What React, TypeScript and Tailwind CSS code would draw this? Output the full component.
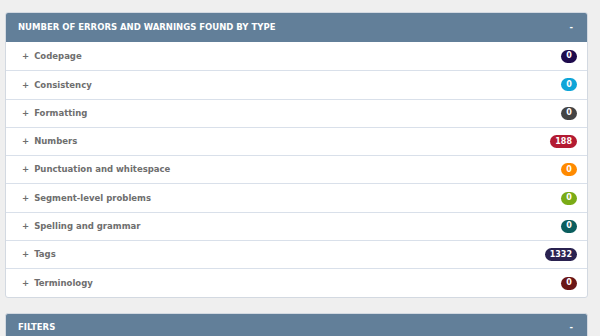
import React from "react";

const rows: { label: string; count: string; color: string }[] = [
  { label: "Codepage", count: "0", color: "bg-[#1e0b4d]" },
  { label: "Consistency", count: "0", color: "bg-[#0ea5d8]" },
  { label: "Formatting", count: "0", color: "bg-[#444444]" },
  { label: "Numbers", count: "188", color: "bg-[#b31b32]" },
  { label: "Punctuation and whitespace", count: "0", color: "bg-[#ff8a00]" },
  { label: "Segment-level problems", count: "0", color: "bg-[#7aab16]" },
  { label: "Spelling and grammar", count: "0", color: "bg-[#0b5e5e]" },
  { label: "Tags", count: "1332", color: "bg-[#2a2250]" },
  { label: "Terminology", count: "0", color: "bg-[#6a1616]" },
];

export default function App() {
  return (
    <div
      className="w-[600px] h-[336px] overflow-hidden bg-[#efefef] pt-[12px] pl-[5px] pr-[12px]"
      style={{ fontFamily: '"DejaVu Sans", Verdana, sans-serif' }}
    >
      <div className="rounded-[3px] border border-[#d3d9e1] bg-white overflow-hidden">
        <div className="h-[29px] bg-[#627f99] flex items-center justify-between pl-[12px] pr-[14px] text-white font-bold text-[8.5px]">
          <span>NUMBER OF ERRORS AND WARNINGS FOUND BY TYPE</span>
          <span>-</span>
        </div>
        {rows.map((r, i) => (
          <div
            key={r.label}
            className={`h-[28.3px] flex items-center justify-between pl-[16px] pr-[10px] ${
              i > 0 ? "border-t border-[#d9e0ea]" : ""
            }`}
          >
            <span className="text-[8.5px] font-bold text-[#6e6e6e]">
              <span className="mr-[5px]">+</span>
              {r.label}
            </span>
            <span
              className={`${r.color} h-[13px] min-w-[16px] px-[5px] rounded-full flex items-center justify-center text-white text-[8px] font-bold`}
            >
              {r.count}
            </span>
          </div>
        ))}
      </div>
      <div className="mt-[15px] rounded-t-[3px] border border-[#d3d9e1] bg-[#627f99] h-[29px] flex items-center justify-between pl-[12px] pr-[14px] text-white font-bold text-[8.5px]">
        <span>FILTERS</span>
        <span>-</span>
      </div>
    </div>
  );
}
